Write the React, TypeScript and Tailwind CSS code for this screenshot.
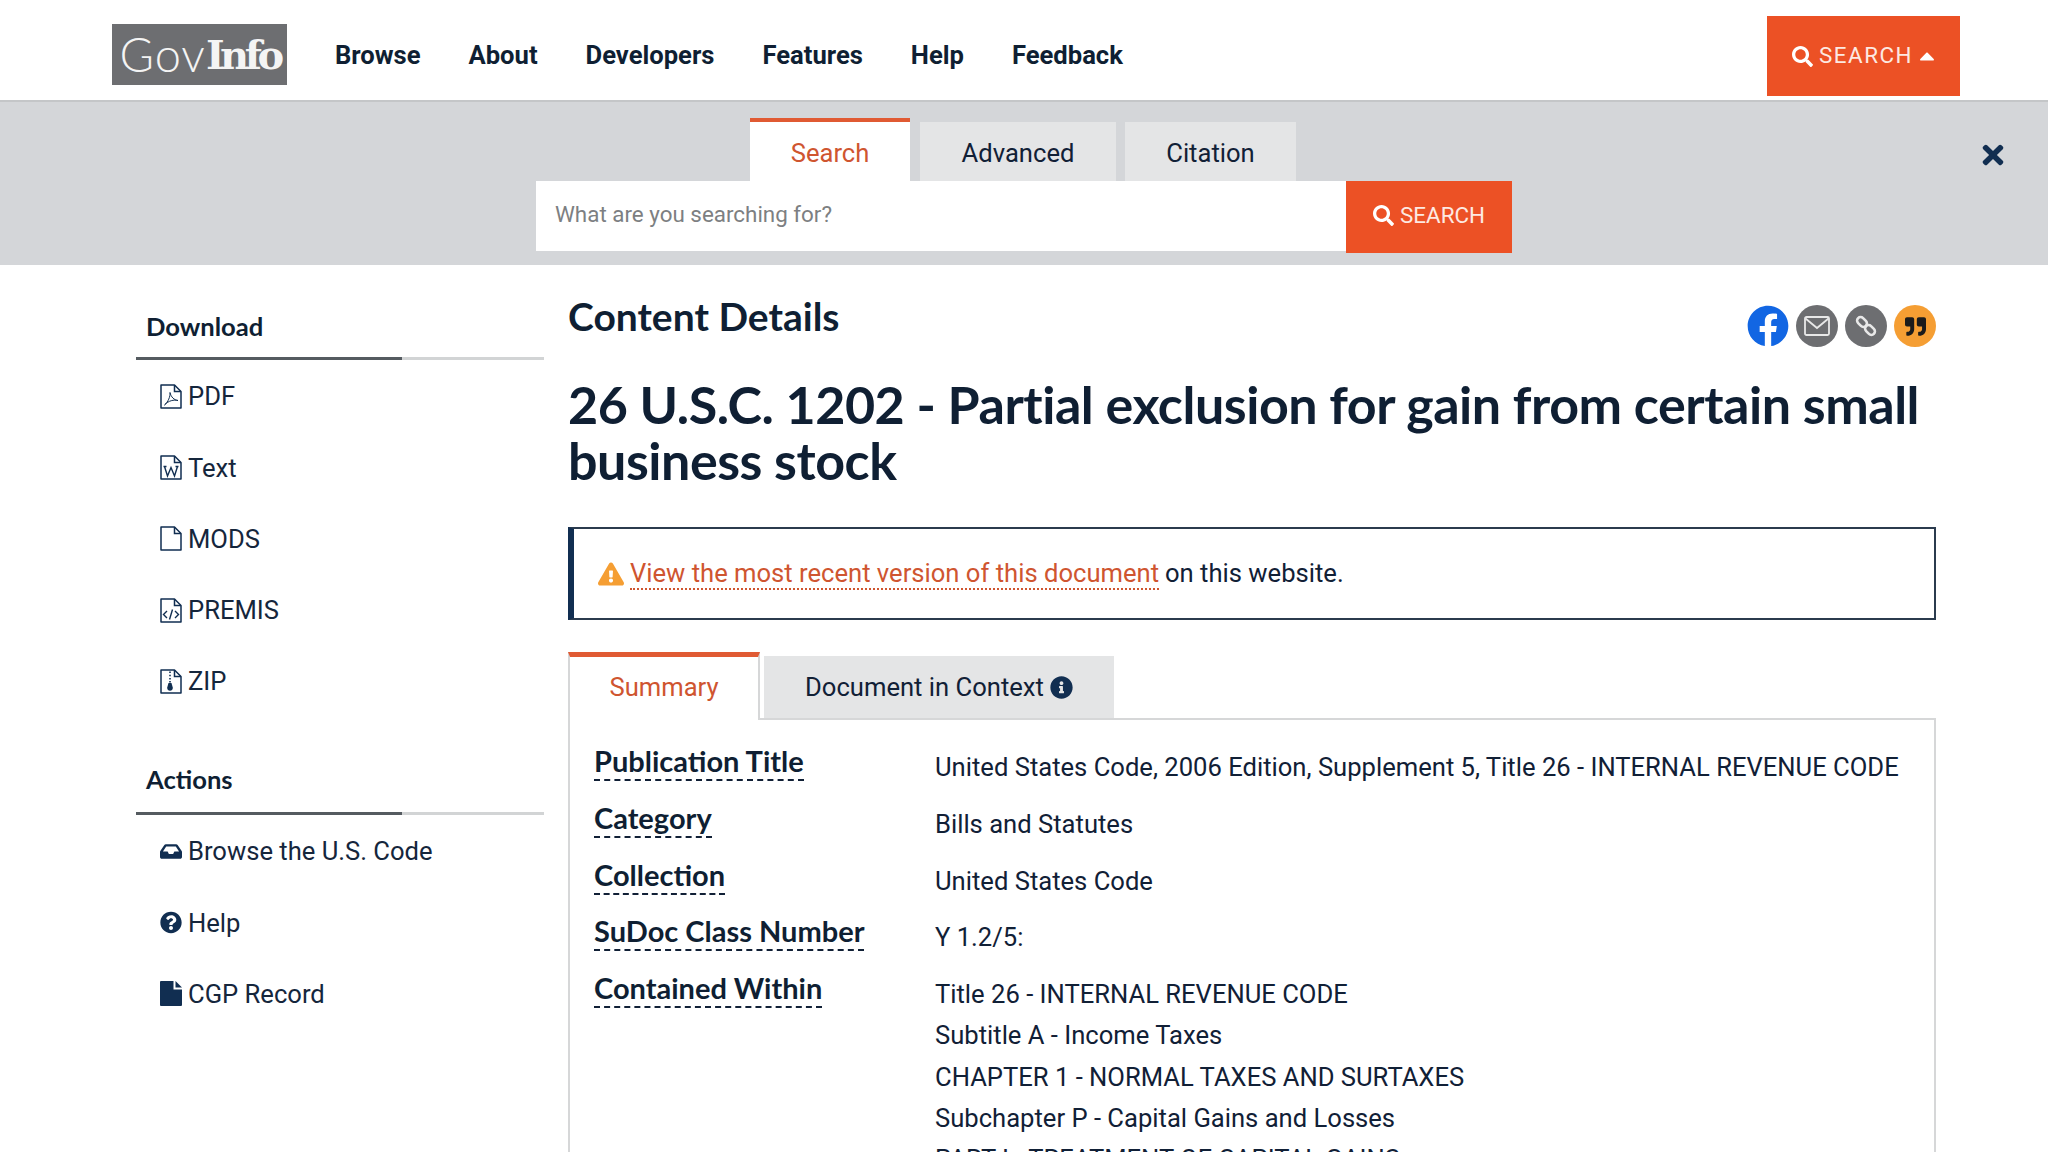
import React from "react";
import {
  FaSearch,
  FaCaretUp,
  FaTimes,
  FaInbox,
  FaQuestionCircle,
  FaExclamationTriangle,
  FaInfoCircle,
  FaQuoteRight,
  FaFacebook,
} from "react-icons/fa";

type IconProps = { className?: string };

// outline page with a folded corner, the glyph inside differs per format
function FileOutline({ className, children }: IconProps & { children?: React.ReactNode }) {
  return (
    <svg viewBox="0 0 22 25" fill="none" stroke="currentColor" strokeWidth="1.5" className={className}>
      <path d="M1 1h13.5L21 7.5V24H1z" strokeLinejoin="round" />
      <path d="M14.5 1v6.5H21" />
      {children}
    </svg>
  );
}

const PdfIcon = ({ className }: IconProps) => (
  <FileOutline className={className}>
    <path d="M4.5 21C8 18 10.5 12.5 10 8.5 11 13 14 16 18 16.5 14 15.5 8.5 16.5 4.5 21z" strokeWidth="1" />
  </FileOutline>
);

const WordIcon = ({ className }: IconProps) => (
  <FileOutline className={className}>
    <path d="M4.5 11.5l3 9.5 3.5-8.5 3.5 8.5 3-9.5M3.5 11.5h3M15.5 11.5h3" strokeWidth="1.4" />
  </FileOutline>
);

const BlankIcon = ({ className }: IconProps) => <FileOutline className={className} />;

const CodeIcon = ({ className }: IconProps) => (
  <FileOutline className={className}>
    <path d="M7 13l-3.5 3.5L7 20M15 13l3.5 3.5L15 20M12.5 11.5l-3 10" strokeWidth="1.4" />
  </FileOutline>
);

const ZipIcon = ({ className }: IconProps) => (
  <FileOutline className={className}>
    <path d="M10 2.5v11" strokeWidth="1.6" strokeDasharray="1.6 1.6" />
    <path d="M8.5 14h3l1.2 4.2a2.8 2.8 0 1 1-5.4 0z" fill="currentColor" stroke="none" />
  </FileOutline>
);

const SolidFileIcon = ({ className }: IconProps) => (
  <svg viewBox="0 0 22 25" fill="currentColor" className={className}>
    <path d="M0 1a1 1 0 0 1 1-1h12.5v8.5H22V24a1 1 0 0 1-1 1H1a1 1 0 0 1-1-1z" />
    <path d="M15.5 0L22 6.5h-6.5z" />
  </svg>
);

const MailIcon = ({ className }: IconProps) => (
  <svg viewBox="0 0 26 20" fill="none" stroke="currentColor" strokeWidth="1.8" className={className}>
    <rect x="1" y="1" width="24" height="18" rx="1.5" />
    <path d="M1.5 2.5L13 12 24.5 2.5" />
  </svg>
);

const ChainIcon = ({ className }: IconProps) => (
  <svg viewBox="0 0 24 24" fill="none" stroke="currentColor" strokeWidth="2.6" className={className}>
    <rect x="2.5" y="4.5" width="11" height="7" rx="3.5" transform="rotate(45 8 8)" />
    <rect x="10.5" y="12.5" width="11" height="7" rx="3.5" transform="rotate(45 16 16)" />
  </svg>
);

const navItems = ["Browse", "About", "Developers", "Features", "Help", "Feedback"];

const downloads = [
  { label: "PDF", icon: PdfIcon },
  { label: "Text", icon: WordIcon },
  { label: "MODS", icon: BlankIcon },
  { label: "PREMIS", icon: CodeIcon },
  { label: "ZIP", icon: ZipIcon },
];

const actions = [
  { label: "Browse the U.S. Code", icon: FaInbox },
  { label: "Help", icon: FaQuestionCircle },
  { label: "CGP Record", icon: SolidFileIcon },
];

const details = [
  { term: "Publication Title", lines: ["United States Code, 2006 Edition, Supplement 5, Title 26 - INTERNAL REVENUE CODE"] },
  { term: "Category", lines: ["Bills and Statutes"] },
  { term: "Collection", lines: ["United States Code"] },
  { term: "SuDoc Class Number", lines: ["Y 1.2/5:"] },
  {
    term: "Contained Within",
    lines: [
      "Title 26 - INTERNAL REVENUE CODE",
      "Subtitle A - Income Taxes",
      "CHAPTER 1 - NORMAL TAXES AND SURTAXES",
      "Subchapter P - Capital Gains and Losses",
      "PART I - TREATMENT OF CAPITAL GAINS",
    ],
  },
];

function SideSection({
  title,
  ruleGap,
  items,
}: {
  title: string;
  ruleGap: string;
  items: { label: string; icon: React.ComponentType<IconProps> }[];
}) {
  return (
    <div>
      <h3 className="pl-[10px] font-['Lato'] text-[25.6px] leading-[36px] font-bold text-[#0f1f33]">{title}</h3>
      <div className={`${ruleGap} flex h-[3px]`}>
        <div className="w-[266px] bg-[#555b60]" />
        <div className="flex-1 bg-[#d2d4d5]" />
      </div>
      <ul className="mt-[1px] pl-[24px]">
        {items.map((item) => (
          <li key={item.label} className="flex h-[71.2px] items-center gap-[6px] text-[25.6px] text-[#15263c]">
            <item.icon className="h-[25px] w-[22px] shrink-0 text-[#112e51]" />
            {item.label}
          </li>
        ))}
      </ul>
    </div>
  );
}

export default function App() {
  return (
    <div className="h-[1152px] overflow-hidden bg-white font-['Roboto',sans-serif] text-[#112036]">
      {/* top nav */}
      <header className="flex h-[102px] items-center border-b-2 border-[#c4c6c8] pt-[12px] pr-[88px] pl-[112px]">
        <div className="mb-[3px] flex h-[61px] w-[175px] items-center justify-center bg-[#6d6e71] text-[#f4f4f4]">
          <span className="font-['Lato'] text-[47px] font-light tracking-[1px]">Gov</span>
          <span className="font-['DejaVu_Serif'] text-[40px] font-bold tracking-[-4.5px]">Info</span>
        </div>
        <nav className="mb-[2px] ml-[48px] flex gap-[48px] text-[25.6px] font-bold text-[#0f1f33]">
          {navItems.map((item) => (
            <span key={item}>{item}</span>
          ))}
        </nav>
        <button className="ml-auto flex h-[80px] w-[193px] items-center justify-center gap-[6px] bg-[#ec5125] text-[22.4px] tracking-[1.5px] text-[#fde9e2]">
          <FaSearch className="h-[21px] w-[21px] text-white" />
          SEARCH
          <FaCaretUp className="h-[24px] w-[16px] text-white" />
        </button>
      </header>

      {/* search band */}
      <section className="relative h-[163px] bg-[#d4d6d9]">
        <div className="flex h-[79px] items-end pl-[750px] text-[25.6px]">
          <div className="flex h-[63px] w-[160px] items-center justify-center border-t-4 border-[#e05a33] bg-white pt-[3px] text-[#cf5530]">Search</div>
          <div className="ml-[10px] flex h-[59px] w-[196px] items-center justify-center bg-[#e4e5e6] pt-[3px]">Advanced</div>
          <div className="ml-[9px] flex h-[59px] w-[171px] items-center justify-center bg-[#e4e5e6] pt-[3px]">Citation</div>
        </div>
        <div className="flex pl-[536px]">
          <div className="flex h-[70px] w-[810px] items-center bg-white pb-[2px] pl-[19px] text-[22.4px] text-[#7d7f82]">What are you searching for?</div>
          <button className="flex h-[72px] w-[166px] items-center justify-center gap-[6px] bg-[#ec5125] pb-[3px] text-[22.4px] text-[#fde9e2]">
            <FaSearch className="h-[21px] w-[21px] text-white" />
            SEARCH
          </button>
        </div>
        <FaTimes className="absolute top-[38px] right-[44px] h-[30px] w-[22px] text-[#112e51]" />
      </section>

      <div className="flex pr-[112px] pl-[136px]">
        {/* sidebar */}
        <aside className="w-[408px] shrink-0 pt-[43px]">
          <SideSection title="Download" ruleGap="mt-[13px]" items={downloads} />
          <div className="mt-[44px]">
            <SideSection title="Actions" ruleGap="mt-[15px]" items={actions} />
          </div>
        </aside>

        {/* main column */}
        <main className="ml-[24px] flex-1">
          <div className="flex items-start justify-between pt-[26px]">
            <h2 className="font-['Lato'] text-[39px] leading-[50px] font-bold text-[#0f1f33]">Content Details</h2>
            <div className="mt-[14px] flex gap-[7px]">
              <span className="flex h-[42px] w-[42px] items-center justify-center rounded-full bg-white text-[#1266e3]">
                <FaFacebook className="h-[42px] w-[42px]" />
              </span>
              <span className="flex h-[42px] w-[42px] items-center justify-center rounded-full bg-[#6d6e71] text-[#e8e8e8]">
                <MailIcon className="h-[20px] w-[26px]" />
              </span>
              <span className="flex h-[42px] w-[42px] items-center justify-center rounded-full bg-[#6d6e71] text-[#e8e8e8]">
                <ChainIcon className="h-[24px] w-[24px]" />
              </span>
              <span className="flex h-[42px] w-[42px] items-center justify-center rounded-full bg-[#f59e33] text-[#1b1b1b]">
                <FaQuoteRight className="h-[21px] w-[21px]" />
              </span>
            </div>
          </div>

          <h1 className="mt-[29px] font-['Lato'] text-[52px] leading-[56px] font-bold tracking-[-0.47px] text-[#0f1f33]">
            26 U.S.C. 1202 - Partial exclusion for gain from certain small business stock
          </h1>

          <div className="mt-[39px] flex h-[93px] items-center border-2 border-l-[6px] border-[#2b3b4e] border-l-[#112e51] pl-[24px] text-[25.6px]">
            <FaExclamationTriangle className="mr-[6px] h-[24px] w-[26px] text-[#f59e33]" />
            <span className="border-b-2 border-dotted border-[#cf5530] leading-[30px] text-[#cf5530]">View the most recent version of this document</span>
            <span className="ml-[6px]">on this website.</span>
          </div>

          {/* summary tabs */}
          <div className="mt-[32px] flex items-end border-b-2 border-[#d6d7d8] text-[25.6px]">
            <div className="-mb-[2px] flex h-[68px] w-[192px] items-center justify-center border-t-[5px] border-r-2 border-l-2 border-[#d6d7d8] border-t-[#e05a33] bg-white pb-[2px] text-[#cf5530]">
              Summary
            </div>
            <div className="ml-[4px] flex h-[62px] w-[350px] items-center justify-center gap-[6px] bg-[#e4e5e6]">
              Document in Context
              <FaInfoCircle className="h-[23px] w-[23px] text-[#112e51]" />
            </div>
          </div>

          <div className="border-x-2 border-[#d6d7d8] pt-[23px] pl-[24px]">
            {details.map((row) => (
              <div key={row.term} className="mb-[11.5px] flex">
                <div className="w-[341px] shrink-0">
                  <span className="inline-block border-b-2 border-dashed border-[#112036] font-['Lato'] text-[29px] leading-[36px] font-bold text-[#0f1f33]">
                    {row.term}
                  </span>
                </div>
                <div className="pt-[4px] text-[25.6px] leading-[41.3px]">
                  {row.lines.map((line) => (
                    <div key={line}>{line}</div>
                  ))}
                </div>
              </div>
            ))}
          </div>
        </main>
      </div>
    </div>
  );
}
